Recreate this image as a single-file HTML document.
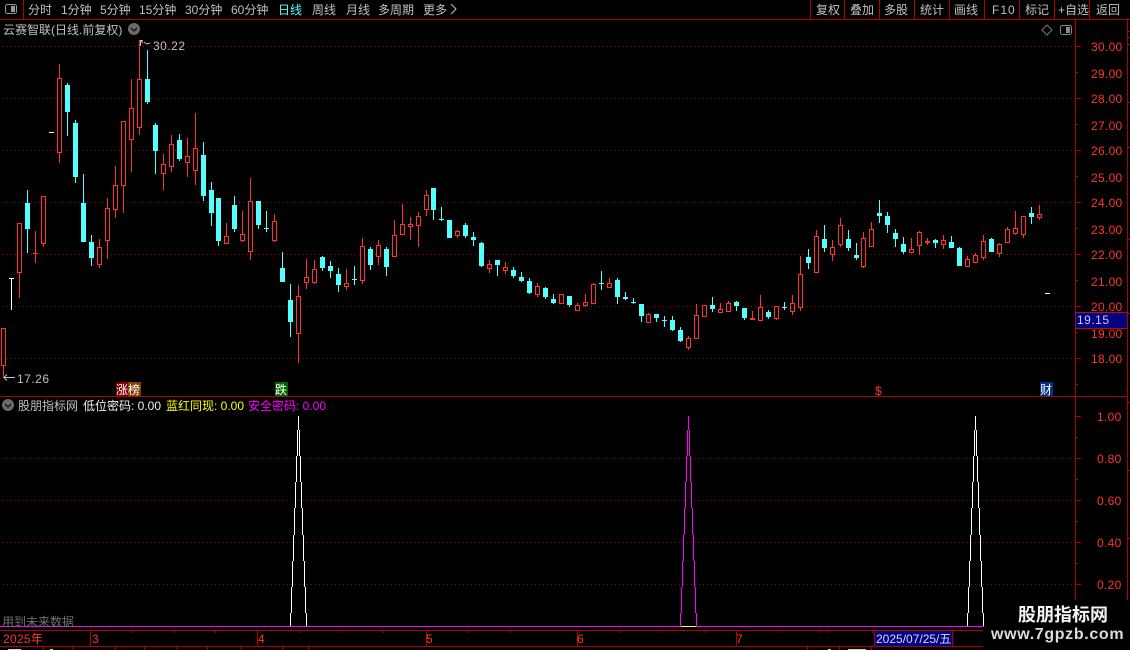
<!DOCTYPE html>
<html><head><meta charset="utf-8"><style>
html,body{margin:0;padding:0;background:#000;width:1130px;height:650px;overflow:hidden}
svg{display:block}
text{font-family:"Liberation Sans","WenQuanYi Zen Hei","Noto Sans CJK SC",sans-serif;font-size:12px;white-space:pre}
.g{fill:#c0c0c0}.r{fill:#ff3232}
</style></head><body>
<svg width="1130" height="650" viewBox="0 0 1130 650" xmlns="http://www.w3.org/2000/svg">
<rect width="1130" height="650" fill="#000"/>
<g shape-rendering="crispEdges">
<!-- grid -->
<path d="M3 46.5H1075M3 98.5H1075M3 150.5H1075M3 202.5H1075M3 254.5H1075M3 306.5H1075M3 358.5H1075M3 458.5H1075M3 500.5H1075M3 542.5H1075M3 584.5H1075" stroke="#a00000" stroke-dasharray="1 3" fill="none"/>
<!-- frame -->
<path d="M0 19.5H1130M0 396.5H1127M23.5 0V19M810.5 0V19M844.5 0V19M879.5 0V19M914.5 0V19M949.5 0V19M984.5 0V19M1019.5 0V19M1054.5 0V19M1089.5 0V19M1075.5 20V600M1127.5 20V600M0 630.5H983M0 646.5H983M90.5 630V646M257.5 630V646M426.5 630V646M577.5 630V646M736.5 630V646M874.5 631V646M952.5 631V646M132.5 630v3M174.5 630v3M215.5 630v3M299.5 630v3M341.5 630v3M383.5 630v3M468.5 630v3M510.5 630v3M619.5 630v3M661.5 630v3M705.5 630v3M778.5 630v3M820.5 630v3M827.5 630v3M872.5 630v3M43.5 647v3M73.5 647v3M115.5 647v3M144.5 647v3M177.5 647v3M207.5 647v3M241.5 647v3M282.5 647v3M308.5 647v3M807.5 647v3M839.5 647v3M871.5 647v3" stroke="#b00000" fill="none"/>
<path d="M1075 46.5h6M1075 72.5h3M1075 98.5h6M1075 124.5h3M1075 150.5h6M1075 176.5h3M1075 202.5h6M1075 228.5h3M1075 254.5h6M1075 280.5h3M1075 306.5h6M1075 332.5h3M1075 358.5h6M1075 384.5h3M1075 416.5h6M1075 437.5h3M1075 458.5h6M1075 479.5h3M1075 500.5h6M1075 521.5h3M1075 542.5h6M1075 563.5h3M1075 584.5h6M1127 31.5h3M1127 37.5h3M1127 44.5h3M1127 102.5h3M1127 147.5h3M1127 239.5h3M1127 313.5h3M1127 402.5h3M1127 470.5h3M1127 538.5h3" stroke="#b00000" fill="none"/>
<!-- wicks red -->
<path stroke="#ff3232" fill="none" d="M3.5 328V378M19.5 223V298M35.5 231V263M43.5 196V247M59.5 64V163M99.5 239V268M107.5 198V259M115.5 166V218M123.5 121V213M131.5 79V172M139.5 40V135M163.5 154V190M171.5 135V172M187.5 138V177M195.5 113V185M226.5 223V244M242.5 211V242M250.5 178V260M274.5 214V242M298.5 285V363M306.5 259V289M314.5 260V284M346.5 269V290M362.5 238V284M378.5 240V265M394.5 220V256M402.5 204V234M410.5 217V240M418.5 212V247M426.5 190V216M457.5 230V238M489.5 260V273M505.5 262V274M537.5 283V297M561.5 294V303M577.5 303V311M585.5 294V307M593.5 283V303M609.5 278V287M648.5 313V322M688.5 336V350M696.5 304V338M704.5 305V317M720.5 303V313M728.5 301V311M752.5 311V320M760.5 295V320M776.5 306V320M792.5 295V315M800.5 256V311M816.5 230V273M832.5 240V261M840.5 218V247M863.5 232V268M871.5 222V246M911.5 238V252M919.5 231V255M927.5 238V245M943.5 235V249M967.5 256V266M975.5 253V263M983.5 235V260M999.5 243V257M1007.5 227V242M1015.5 211V235M1023.5 216V238M1039.5 205V220"/>
<!-- red bodies -->
<path stroke="#ff3232" fill="#000" d="M1.5 328.5h4v37h-4zM17.5 223.5h4v49h-4zM41.5 196.5h4v47h-4zM57.5 78.5h4v74h-4zM97.5 247.5h4v17h-4zM105.5 208.5h4v32h-4zM113.5 185.5h4v24h-4zM121.5 121.5h4v64h-4zM129.5 108.5h4v31h-4zM137.5 79.5h4v48h-4zM161.5 164.5h4v9h-4zM169.5 144.5h4v22h-4zM185.5 156.5h4v6h-4zM193.5 148.5h4v22h-4zM224.5 236.5h4v7h-4zM240.5 234.5h4v6h-4zM248.5 201.5h4v50h-4zM272.5 221.5h4v19h-4zM296.5 296.5h4v37h-4zM304.5 277.5h4v5h-4zM312.5 269.5h4v13h-4zM344.5 283.5h4v3h-4zM360.5 246.5h4v34h-4zM376.5 245.5h4v11h-4zM392.5 235.5h4v21h-4zM400.5 224.5h4v10h-4zM408.5 224.5h4v2h-4zM416.5 216.5h4v9h-4zM424.5 195.5h4v14h-4zM455.5 231.5h4v4h-4zM487.5 264.5h4v4h-4zM503.5 267.5h4v3h-4zM535.5 286.5h4v8h-4zM559.5 294.5h4v9h-4zM575.5 305.5h4v5h-4zM583.5 302.5h4v3h-4zM591.5 284.5h4v19h-4zM607.5 283.5h4v4h-4zM646.5 314.5h4v8h-4zM686.5 338.5h4v9h-4zM694.5 315.5h4v23h-4zM702.5 305.5h4v11h-4zM718.5 309.5h4v3h-4zM726.5 303.5h4v8h-4zM758.5 307.5h4v13h-4zM774.5 306.5h4v12h-4zM790.5 303.5h4v8h-4zM798.5 274.5h4v33h-4zM814.5 236.5h4v36h-4zM830.5 247.5h4v7h-4zM838.5 225.5h4v19h-4zM861.5 238.5h4v28h-4zM869.5 229.5h4v17h-4zM909.5 249.5h4v3h-4zM917.5 232.5h4v13h-4zM941.5 240.5h4v4h-4zM965.5 259.5h4v7h-4zM973.5 255.5h4v7h-4zM981.5 241.5h4v16h-4zM997.5 244.5h4v9h-4zM1005.5 229.5h4v13h-4zM1013.5 228.5h4v5h-4zM1021.5 216.5h4v18h-4zM1037.5 214.5h4v3h-4z"/>
<path fill="#ff3232" d="M33 253h5v1h-5zM750 318h5v2h-5zM925 241h5v2h-5z"/>
<!-- wicks cyan -->
<path stroke="#54ffff" fill="none" d="M27.5 190V253M67.5 83V136M75.5 120V183M83.5 174V242M91.5 235V266M147.5 50V104M155.5 123V174M179.5 134V161M203.5 142V201M211.5 182V226M218.5 198V246M234.5 196V232M258.5 201V229M266.5 211V232M282.5 252V282M290.5 284V337M322.5 256V271M330.5 261V278M338.5 268V292M354.5 266V285M370.5 247V270M386.5 247V276M433.5 188V220M441.5 207V221M449.5 220V238M465.5 223V238M473.5 232V246M481.5 242V267M497.5 260V276M513.5 267V278M521.5 272V282M529.5 278V294M545.5 287V299M553.5 294V304M569.5 296V307M601.5 271V290M617.5 278V304M625.5 292V300M633.5 298V304M641.5 304V322M656.5 314V322M664.5 316V327M672.5 316V331M680.5 327V342M712.5 297V312M736.5 301V311M744.5 308V320M768.5 310V319M784.5 302V310M808.5 249V269M824.5 225V252M848.5 230V251M856.5 243V260M879.5 200V223M887.5 212V233M895.5 229V247M903.5 237V254M935.5 239V248M951.5 236V248M959.5 247V266M991.5 238V252M1031.5 207V224"/>
<path fill="#54ffff" d="M25 203h5v26h-5zM65 85h5v27h-5zM73 123h5v54h-5zM81 203h5v39h-5zM89 242h5v16h-5zM145 79h5v23h-5zM153 125h5v26h-5zM177 140h5v19h-5zM201 155h5v41h-5zM209 190h5v23h-5zM216 198h5v43h-5zM232 205h5v24h-5zM256 201h5v24h-5zM264 228h5v1h-5zM280 268h5v14h-5zM288 300h5v22h-5zM320 257h5v11h-5zM328 266h5v5h-5zM336 274h5v11h-5zM352 279h5v1h-5zM368 249h5v16h-5zM384 249h5v18h-5zM431 188h5v22h-5zM439 219h5v1h-5zM447 220h5v18h-5zM463 225h5v11h-5zM471 237h5v3h-5zM479 243h5v23h-5zM495 260h5v5h-5zM511 270h5v6h-5zM519 277h5v4h-5zM527 281h5v12h-5zM543 288h5v9h-5zM551 299h5v4h-5zM567 296h5v9h-5zM599 283h5v1h-5zM615 280h5v17h-5zM623 297h5v2h-5zM631 302h5v1h-5zM639 304h5v12h-5zM654 314h5v4h-5zM662 320h5v1h-5zM670 320h5v10h-5zM678 330h5v11h-5zM710 305h5v4h-5zM734 302h5v4h-5zM742 308h5v10h-5zM766 312h5v5h-5zM782 307h5v1h-5zM806 257h5v6h-5zM822 239h5v9h-5zM846 239h5v9h-5zM854 255h5v3h-5zM877 213h5v3h-5zM885 216h5v9h-5zM893 233h5v6h-5zM901 244h5v8h-5zM933 240h5v3h-5zM949 242h5v6h-5zM957 248h5v18h-5zM989 239h5v13h-5zM1029 213h5v4h-5z"/>
<!-- white marks -->
<path stroke="#fff" fill="none" d="M11.5 278V310M9 278.5h5M49 132.5h5M1045 293.5h5"/>
<!-- peaks white -->
<path stroke="#fff" fill="none" d="M298.5 416V430M297.5 430V456M299.5 430V456M296.5 456V482M300.5 456V482M295.5 482V508M301.5 482V508M294.5 508V535M302.5 508V535M293.5 535V561M303.5 535V561M292.5 561V587M304.5 561V587M291.5 587V613M305.5 587V613M290.5 613V626M306.5 613V626M975.5 416V430M974.5 430V456M976.5 430V456M973.5 456V482M977.5 456V482M972.5 482V508M978.5 482V508M971.5 508V535M979.5 508V535M970.5 535V561M980.5 535V561M969.5 561V587M981.5 561V587M968.5 587V613M982.5 587V613M967.5 613V626M983.5 613V626"/>
<!-- peak magenta -->
<path stroke="#ff00ff" fill="none" d="M688.5 416V430M687.5 430V456M689.5 430V456M686.5 456V482M690.5 456V482M685.5 482V508M691.5 482V508M684.5 508V535M692.5 508V535M683.5 535V561M693.5 535V561M682.5 561V587M694.5 561V587M681.5 587V613M695.5 587V613M680.5 613V626M696.5 613V626"/>
<rect x="0" y="626" width="984" height="1" fill="#ff00ff"/>
<rect x="681" y="626" width="15" height="1" fill="#ffff00"/>
<!-- value box -->
<rect x="1076" y="313" width="51" height="15" fill="#000080"/>
<path d="M1075 312.5H1128M1075 328.5H1128" stroke="#d00000" fill="none"/>
<rect x="875" y="631" width="77" height="15" fill="#000080"/>
<!-- tag backgrounds -->
<rect x="116" y="382" width="13" height="14" fill="#800000"/>
<rect x="128" y="382" width="13" height="14" fill="#804000"/>
<rect x="275" y="382" width="13" height="14" fill="#006400"/>
<rect x="1040" y="382" width="13" height="14" fill="#003080"/>
<!-- clipped tab text tops -->
<path d="M8 649h13v1H8zM50 649h3v1h-3zM848 649h18v1h-18zM828 649h3v1h-3z" fill="#d0d0d0"/>
</g>
<!-- icons -->
<rect x="5.500" y="4.500" width="11" height="9" rx="2" fill="none" stroke="#9a9a9a"/><rect x="11" y="6" width="4" height="6" fill="#9a9a9a"/>
<rect x="1060.500" y="25.500" width="11" height="9" rx="2" fill="none" stroke="#8a8a8a"/><rect x="1066" y="27" width="4" height="6" fill="#8a8a8a"/>
<path d="M1047 25l5 5-5 5-5-5z" fill="none" stroke="#777"/>
<circle cx="134" cy="29" r="6" fill="#6a6a6a"/><path d="M131 28l3 3 3-3" fill="none" stroke="#111" stroke-width="1.3"/>
<circle cx="8" cy="405" r="6" fill="#6a6a6a"/><path d="M5 404l3 3 3-3" fill="none" stroke="#111" stroke-width="1.3"/>
<path d="M140.500 46V40.500H143M141 41l2 2M144 42l3 2 3-1" fill="none" stroke="#c0c0c0"/>
<path d="M4 377.500H15M4 377.500l3-3M4 377.500l3 3" fill="none" stroke="#c0c0c0"/>
<path d="M451 4l5 5-5 5" fill="none" stroke="#c0c0c0"/>
<!-- toolbar text -->
<g class="g">
<text x="28" y="14">分时</text><text x="61" y="14">1分钟</text><text x="100" y="14">5分钟</text><text x="139" y="14">15分钟</text><text x="185" y="14">30分钟</text><text x="231" y="14">60分钟</text>
<text x="278" y="14" style="fill:#54ffff">日线</text>
<text x="312" y="14">周线</text><text x="346" y="14">月线</text><text x="378" y="14">多周期</text><text x="423" y="14">更多</text>
<text x="816" y="14">复权</text><text x="850" y="14">叠加</text><text x="884" y="14">多股</text><text x="920" y="14">统计</text><text x="954" y="14">画线</text><text x="992" y="14" letter-spacing="1">F10</text><text x="1025" y="14">标记</text><text x="1058" y="14">+自选</text><text x="1096" y="14">返回</text>
<text x="3" y="34">云赛智联(日线.前复权)</text>
<text x="153" y="50" letter-spacing=".5">30.22</text>
<text x="17" y="383" letter-spacing=".5">17.26</text>
<text x="18" y="410">股朋指标网</text>
</g>
<text x="83" y="410" fill="#f0f0f0">低位密码: 0.00</text>
<text x="166" y="410" fill="#ffff00">蓝红同现: 0.00</text>
<text x="248" y="410" fill="#ff00ff">安全密码: 0.00</text>
<text x="116" y="394" fill="#fff">涨</text><text x="128" y="394" fill="#fff">榜</text><text x="275" y="394" fill="#fff">跌</text><text x="1040" y="394" fill="#fff">财</text>
<text x="875" y="395" fill="#ff3232">$</text>
<text x="2" y="626" fill="#707070">用到未来数据</text>
<!-- axis -->
<g class="r" letter-spacing=".3">
<text x="1091" y="51">30.00</text><text x="1091" y="78">29.00</text><text x="1091" y="103">28.00</text><text x="1091" y="130">27.00</text><text x="1091" y="155">26.00</text><text x="1091" y="182">25.00</text><text x="1091" y="207">24.00</text><text x="1091" y="234">23.00</text><text x="1091" y="259">22.00</text><text x="1091" y="286">21.00</text><text x="1091" y="311">20.00</text><text x="1091" y="338">19.00</text><text x="1091" y="363">18.00</text>
<text x="1097" y="421">1.00</text><text x="1097" y="463">0.80</text><text x="1097" y="505">0.60</text><text x="1097" y="547">0.40</text><text x="1097" y="589">0.20</text>
<text x="3" y="643">2025年</text><text x="92" y="643">3</text><text x="258" y="643">4</text><text x="426" y="643">5</text><text x="577" y="643">6</text><text x="736" y="643">7</text>
</g>
<text x="1077" y="324" fill="#c8c8ff" letter-spacing=".5">19.15</text>
<text x="876" y="643" fill="#d8d8ff">2025/07/25/五</text>
<!-- watermark -->
<text x="1018" y="621" style="font-size:18px;font-weight:bold;font-family:'Liberation Sans','Noto Sans CJK SC',sans-serif" fill="#f4f4f4">股朋指标网</text>
<text x="991" y="639" style="font-size:16px;font-weight:bold" letter-spacing=".65" fill="#dcdcdc">www.7gpzb.com</text>
</svg>
</body></html>
